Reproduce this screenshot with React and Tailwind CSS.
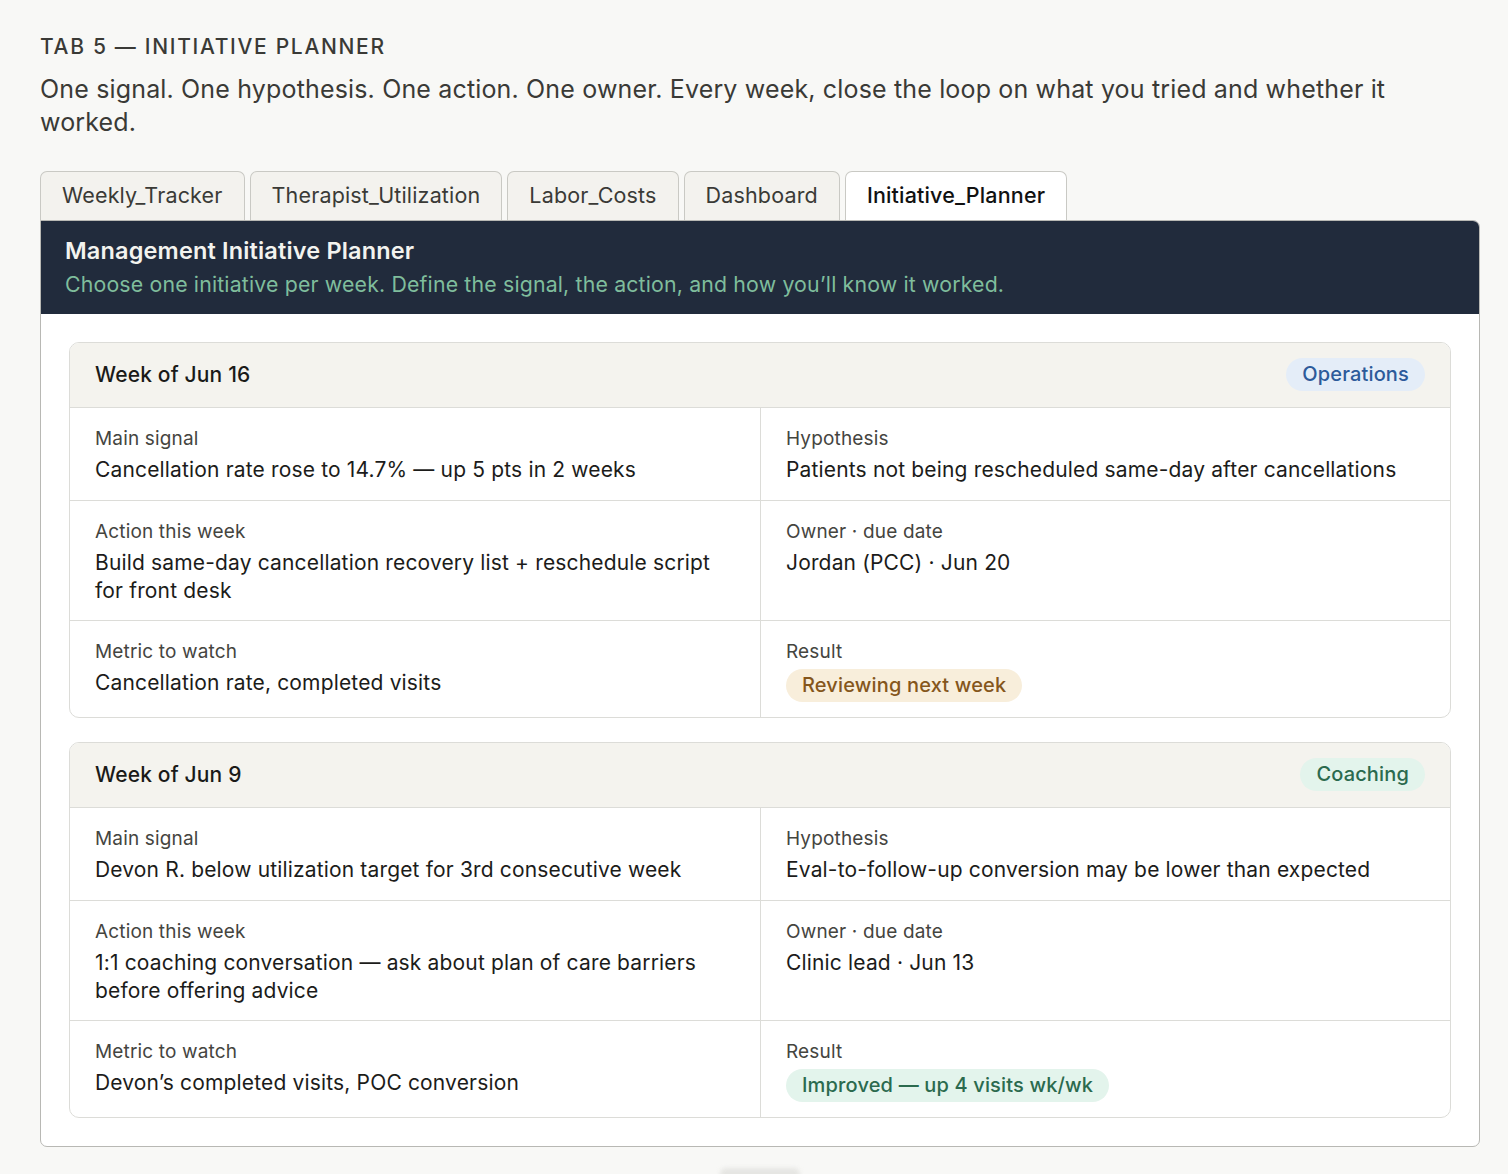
const tabs = ["Weekly_Tracker", "Therapist_Utilization", "Labor_Costs", "Dashboard", "Initiative_Planner"];

const weeks = [
  {
    title: "Week of Jun 16",
    tag: "Operations",
    tagClass: "bg-[#e4edf8] text-[#2c5a9a]",
    rows: [
      [
        { label: "Main signal", value: "Cancellation rate rose to 14.7% — up 5 pts in 2 weeks" },
        { label: "Hypothesis", value: "Patients not being rescheduled same-day after cancellations" },
      ],
      [
        { label: "Action this week", value: "Build same-day cancellation recovery list + reschedule script for front desk" },
        { label: "Owner · due date", value: "Jordan (PCC) · Jun 20" },
      ],
      [
        { label: "Metric to watch", value: "Cancellation rate, completed visits" },
        { label: "Result", pill: "Reviewing next week", pillClass: "bg-[#f8eedb] text-[#85561c]" },
      ],
    ],
  },
  {
    title: "Week of Jun 9",
    tag: "Coaching",
    tagClass: "bg-[#e3f4ec] text-[#2b6a4e]",
    rows: [
      [
        { label: "Main signal", value: "Devon R. below utilization target for 3rd consecutive week" },
        { label: "Hypothesis", value: "Eval-to-follow-up conversion may be lower than expected" },
      ],
      [
        { label: "Action this week", value: "1:1 coaching conversation — ask about plan of care barriers before offering advice" },
        { label: "Owner · due date", value: "Clinic lead · Jun 13" },
      ],
      [
        { label: "Metric to watch", value: "Devon’s completed visits, POC conversion" },
        { label: "Result", pill: "Improved — up 4 visits wk/wk", pillClass: "bg-[#e3f4ec] text-[#2b6a4e]" },
      ],
    ],
  },
];

function Cell({ cell, right, first }) {
  return (
    <div className={`px-[25px] pt-[18px] ${first ? "pb-[16px]" : "pb-[15px]"} ${right ? "border-l border-[#dcdcd8]" : ""}`}>
      <div className="text-[19px] leading-[26px] text-[#45453f]">{cell.label}</div>
      {cell.value && <div className="mt-[4px] text-[21px] leading-[28px] text-[#1c1c1a] max-w-[640px]">{cell.value}</div>}
      {cell.pill && (
        <span className={`mt-[4px] inline-block rounded-full px-[16px] py-[3px] text-[20px] leading-[27px] font-medium ${cell.pillClass}`}>
          {cell.pill}
        </span>
      )}
    </div>
  );
}

function WeekCard({ week }) {
  return (
    <div className="rounded-[10px] border border-[#dcdcd8] bg-white overflow-hidden">
      <div className="flex items-center justify-between h-[65px] px-[25px] bg-[#f4f3ee] border-b border-[#dcdcd8]">
        <div className="text-[21px] font-medium text-[#1a1a18]">{week.title}</div>
        <span className={`rounded-full px-[16px] py-[3px] text-[20px] leading-[27px] font-medium ${week.tagClass}`}>{week.tag}</span>
      </div>
      {week.rows.map((row, i) => (
        <div key={i} className={`grid grid-cols-2 ${i > 0 ? "border-t border-[#dcdcd8]" : ""}`}>
          <Cell cell={row[0]} first={i === 0} />
          <Cell cell={row[1]} first={i === 0} right />
        </div>
      ))}
    </div>
  );
}

export default function App() {
  return (
    <div
      className="relative min-h-screen bg-[#f8f8f6] pl-[40px] pr-[28px] pt-[31px] pb-[27px] text-[#3a3a36] tracking-[0.01em]"
      style={{ fontFamily: "Inter, 'Noto Sans', sans-serif" }}
    >
      {/* Heading */}
      <div className="text-[21px] font-medium tracking-[0.08em] uppercase text-[#3a3a36]">Tab 5 — Initiative Planner</div>
      <p className="mt-[10px] text-[25px] leading-[33px] text-[#3a3a36] pr-[60px]">
        One signal. One hypothesis. One action. One owner. Every week, close the loop on what you tried and whether it worked.
      </p>

      {/* Tabs */}
      <div className="mt-[32px] flex gap-[5px]">
        {tabs.map((t) => {
          const active = t === "Initiative_Planner";
          return (
            <div
              key={t}
              className={`h-[49px] px-[21px] flex items-center rounded-t-[7px] border border-b-0 border-[#c9c9c4] text-[21.5px] ${
                active ? "bg-white text-[#111] font-medium" : "bg-[#f3f2ee] text-[#3a3a36]"
              }`}
            >
              {t}
            </div>
          );
        })}
      </div>

      {/* Panel */}
      <div className="border border-[#b8b8b4] rounded-b-[7px] rounded-tr-[7px] bg-white overflow-hidden">
        <div className="bg-[#212b3c] px-[24px] pt-[14px] pb-[15px]">
          <div className="text-[23.5px] leading-[32px] font-semibold text-[#f3f3ef]">Management Initiative Planner</div>
          <div className="mt-[2px] text-[21.3px] leading-[30px] text-[#7fbd9c]">
            Choose one initiative per week. Define the signal, the action, and how you’ll know it worked.
          </div>
        </div>
        <div className="p-[28px] flex flex-col gap-[24px]">
          {weeks.map((w) => (
            <WeekCard key={w.title} week={w} />
          ))}
        </div>
      </div>

      {/* faint floating shadow at page bottom */}
      <div className="absolute left-[720px] top-[1168px] w-[80px] h-[12px] rounded-full bg-[#e6e6e3] blur-[2px]" />
    </div>
  );
}
